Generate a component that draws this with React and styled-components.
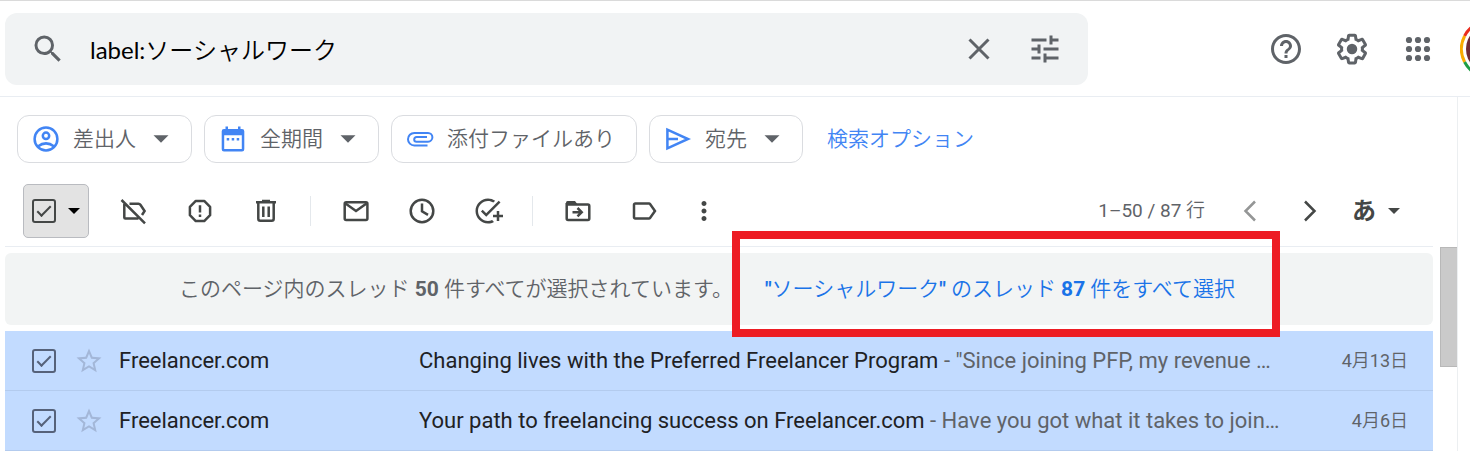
import React from "react";
import styled, { createGlobalStyle } from "styled-components";
import { MdSearch, MdTune, MdHelpOutline, MdAddTask, MdLabelOutline, MdMoreVert, MdStarBorder } from "react-icons/md";

const Global = createGlobalStyle`
  *, *::before, *::after { box-sizing: border-box; }
  body {
    margin: 0;
    background: #fff;
    color: #5f6368;
    font-family: Roboto, "Noto Sans CJK JP", sans-serif;
    font-size: 21px;
    line-height: 30px;
    overflow: hidden;
  }
  button, input { font: inherit; color: inherit; }
`;

const Page = styled.div`
  border-top: 1px solid #dadada;
  overflow: hidden;
`;

const Header = styled.header`
  display: flex;
  align-items: center;
  height: 96px;
  padding-left: 5px;
  border-bottom: 1px solid #e9edf2;
`;

const SearchForm = styled.form`
  flex: 1;
  display: flex;
  align-items: center;
  height: 72px;
  padding: 0 10px;
  background: #f1f3f4;
  border-radius: 12px;
`;

const SearchInput = styled.input`
  flex: 1;
  min-width: 0;
  height: 48px;
  margin-left: 9px;
  padding: 0;
  border: 0;
  outline: 0;
  background: none;
  color: #000;
  font-family: Lato, "Noto Sans CJK JP DemiLight", "Noto Sans CJK JP", sans-serif;
  font-size: 24px;
  font-weight: 400;
`;

const PlainButton = styled.button`
  display: flex;
  align-items: center;
  justify-content: center;
  flex: none;
  width: ${(p) => p.$width || 66}px;
  height: 54px;
  padding: 0;
  border: 0;
  background: none;
  color: ${(p) => p.$color || "#5f6368"};
  svg { display: block; }
`;

const HeaderActions = styled.nav`
  display: flex;
  align-items: center;
  flex: none;
  width: 382px;
  padding-left: 165px;
`;

const AccountLink = styled.a`
  flex: none;
  margin-left: 9px;
  svg { display: block; }
`;

const Body = styled.div`
  display: flex;
`;

const Main = styled.main`
  flex: 1;
  min-width: 0;
`;

const Chips = styled.div`
  display: flex;
  align-items: center;
  gap: 12px;
  padding: 18px 0 0 17px;
  font-weight: 350;
`;

const Chip = styled.button`
  display: flex;
  align-items: center;
  height: 48px;
  padding: 0 ${(p) => (p.$menu ? 12 : 21)}px 0 13px;
  border: 1px solid #dadce0;
  border-radius: 12px;
  background: #fff;
  color: #5f6368;
  white-space: nowrap;
  > svg:first-child { margin-right: 12px; color: #4285f4; }
  > svg + span + svg { margin-left: 7px; }
`;

const OptionsLink = styled.a`
  margin-left: 12px;
  color: #4285f4;
  text-decoration: none;
`;

const Toolbar = styled.div`
  display: flex;
  align-items: center;
  height: 83px;
  padding: 13px 0 0 23px;
`;

const SelectButton = styled.div`
  display: flex;
  align-items: center;
  justify-content: space-between;
  width: 66px;
  height: 54px;
  margin-right: 12px;
  padding: 0 8px;
  border: 1px solid #b9bbc0;
  border-radius: 5px;
  background: #e3e3e3;
`;

const Check = styled.input`
  appearance: none;
  flex: none;
  width: 24px;
  height: 24px;
  margin: 0;
  border: 2px solid ${(p) => p.$color};
  border-radius: 3px;
  display: grid;
  place-items: center;
  &:checked::before {
    content: "";
    width: 14px;
    height: 7px;
    margin-bottom: 4px;
    border-left: 2px solid ${(p) => p.$color};
    border-bottom: 2px solid ${(p) => p.$color};
    transform: rotate(-45deg);
  }
`;

const Divider = styled.span`
  flex: none;
  width: 1px;
  height: 30px;
  margin: 0 12px 0 11px;
  background: #e4e8ec;
`;

const Pager = styled.div`
  display: flex;
  align-items: center;
  margin-left: auto;
  padding-right: 33px;
  font-size: 19px;
`;

const Count = styled.span`
  margin-right: 15px;
  white-space: nowrap;
  font-weight: 350;
`;

const Figure = styled.span`
  font-weight: 400;
`;

const LanguageButton = styled(PlainButton)`
  justify-content: flex-end;
  gap: 12px;
  font-size: 24px;
  font-weight: 700;
`;

const List = styled.section`
  margin-left: 5px;
  padding-top: 6px;
  border-top: 1px solid #e9edf2;
`;

const Banner = styled.div`
  display: flex;
  align-items: center;
  height: 72px;
  margin-bottom: 6px;
  padding-left: 174px;
  border-radius: 6px;
  background: #f2f4f4;
  white-space: nowrap;
  font-weight: 350;
  b { font-weight: 700; }
`;

const Highlight = styled.div`
  position: relative;
  display: flex;
  align-items: center;
  height: 72px;
  margin-left: 32px;
  &::after {
    content: "";
    position: absolute;
    inset: -22px -45px -12px -33px;
    border: 8px solid #ed1c24;
    pointer-events: none;
  }
`;

const SelectAllLink = styled.a`
  color: #1a73e8;
  text-decoration: none;
`;

const MailTable = styled.table`
  width: 100%;
  table-layout: fixed;
  border-collapse: collapse;
`;

const MailRow = styled.tr`
  height: 60px;
  background: #c2dbff;
  box-shadow: inset 0 -1px 0 #b3cbee;
`;

const Cell = styled.td`
  width: ${(p) => (p.$width ? `${p.$width}px` : "auto")};
  padding: 0 ${(p) => p.$right || 0}px 0 ${(p) => p.$left || 0}px;
  color: ${(p) => p.$color || "#202124"};
  font-size: ${(p) => p.$size || 22}px;
  font-weight: ${(p) => p.$weight || 400};
  text-align: ${(p) => p.$align || "left"};
  overflow: hidden;
  text-overflow: ellipsis;
  white-space: nowrap;
`;

const Snippet = styled.span`
  color: #5f6368;
`;

const StarButton = styled(PlainButton)`
  height: 30px;
`;

const ScrollRail = styled.aside`
  flex: none;
  width: 25px;
  margin-right: 12px;
  padding: 150px 0 0 7px;
  border-right: 1px solid #eceff1;
`;

const Thumb = styled.div`
  height: 120px;
  border: 1px solid #b8b8b8;
  border-right: 0;
  background: #cacaca;
`;

const Line = ({ children, width = 2.5 }) => (
  <svg width="30" height="30" viewBox="0 0 30 30" fill="none" stroke="currentColor" strokeWidth={width} aria-hidden="true">
    {children}
  </svg>
);

const Caret = ({ width, box, color }) => (
  <svg width={box} height={box} viewBox={`0 0 ${box} ${box}`} fill={color} aria-hidden="true">
    <path d={`M${(box - width) / 2} ${box / 2 - width / 4}h${width}l-${width / 2} ${width / 2}z`} />
  </svg>
);

const LabelOff = () => (
  <Line>
    <path d="M2.5 4L26 27.3M5.3 8V21.5Q5.3 22.5 6.3 22.5H19.5M10.5 7.7H19.5Q20.7 7.7 21.4 8.7L25.6 15l-2.6 4" />
  </Line>
);
const Report = () => (
  <Line>
    <path d="M10.8 4.9h8.4l5.900 5.900v8.400l-5.900 5.900h-8.400l-5.900-5.900v-8.400z" strokeLinejoin="round" />
    <path d="M15 9.200v7.300M15 18.400v2.500" />
  </Line>
);
const Trash = () => (
  <Line>
    <path d="M5 6.300h20M11 5h8M7.300 7v15.700q0 2 2 2h11.400q2 0 2-2V7M12.300 10.500v10.500M17.700 10.500v10.500" />
  </Line>
);
const Mail = () => (
  <Line>
    <rect x="3.700" y="6.200" width="22.700" height="17.700" rx="1.500" />
    <path d="M4.500 7.500L15 15l10.500-7.500" />
  </Line>
);
const Clock = () => (
  <Line>
    <circle cx="15" cy="15" r="11.300" />
    <path d="M15 7.500v7.800l6 3.600" />
  </Line>
);
const MoveTo = () => (
  <Line>
    <path d="M3.700 7v15.500q0 1.400 1.400 1.400h19.800q1.400 0 1.400-1.400V10q0-1.400-1.400-1.400H3.700" />
    <path d="M3 9V6.500q0-1.500 1.500-1.500H12l3 4z" fill="currentColor" stroke="none" />
    <path d="M9.500 16.200h8.500M14.500 12l4.200 4.200-4.200 4.200" />
  </Line>
);
const Prev = () => (<Line><path d="M20 5.500L10.500 15l9.500 9.500" /></Line>);
const Next = () => (<Line><path d="M10 5.500l9.500 9.500-9.500 9.500" /></Line>);
const Person = () => (
  <Line>
    <circle cx="15" cy="15" r="11.400" />
    <circle cx="15" cy="11.800" r="3.200" />
    <path d="M6.800 22.500q8.200-6.200 16.400 0" />
  </Line>
);
const Calendar = () => (
  <svg width="30" height="30" viewBox="0 0 30 30" fill="currentColor" aria-hidden="true">
    <path fillRule="evenodd" d="M7.500 2.500H10V5h10V2.500h2.500V5H24q2.300 0 2.300 2.300v18q0 2.200-2.300 2.200H6q-2.300 0-2.300-2.200v-18Q3.700 5 6 5h1.500zM6.200 11.200v13.800h17.600V11.200z" />
    <path d="M8.700 14h2.500v2.500H8.700zM13.700 14h2.500v2.500h-2.500zM18.700 14h2.500v2.500h-2.500z" />
  </svg>
);
const Clip = () => (
  <Line width={2}>
    <path d="M22.500 21.500H9.300a6.300 6.300 0 0 1 0-12.600H23a4.200 4.200 0 0 1 0 8.800H11.500a2 2 0 0 1 0-4.600H22" />
  </Line>
);
const Send = () => (
  <Line>
    <path d="M4.400 5.600v18.800L25 15z M5 15h10" />
  </Line>
);
const Close = () => (
  <Line width={3}>
    <path d="M5.500 5.500l19 19M24.500 5.500l-19 19" />
  </Line>
);
const Apps = () => (
  <svg width="36" height="36" viewBox="0 0 36 36" fill="currentColor" aria-hidden="true">
    {[9, 18, 27].flatMap((y) => [9, 18, 27].map((x) => <circle key={`${x}-${y}`} cx={x} cy={y} r="3.100" />))}
  </svg>
);
const Gear = () => (
  <svg width="36" height="36" viewBox="0 0 24 24" fill="currentColor" aria-hidden="true">
    <path d="M13.850 22.250h-3.700c-.74 0-1.360-.54-1.450-1.270l-.27-1.890c-.27-.14-.53-.29-.79-.46l-1.800.72c-.7.26-1.470-.03-1.810-.65L2.200 15.530c-.35-.66-.2-1.440.36-1.880l1.530-1.190c-.01-.15-.02-.3-.02-.46 0-.15.01-.31.02-.46l-1.520-1.190c-.59-.45-.74-1.260-.37-1.880l1.850-3.190c.34-.62 1.110-.9 1.790-.63l1.810.73c.26-.17.52-.32.78-.46l.27-1.910c.09-.7.71-1.250 1.440-1.250h3.700c.74 0 1.360.54 1.450 1.270l.27 1.890c.27.14.53.29.79.46l1.800-.72c.71-.26 1.480.03 1.820.65l1.840 3.180c.36.66.2 1.440-.36 1.880l-1.520 1.190c.01.15.02.3.02.46s-.01.31-.02.46l1.520 1.190c.56.45.72 1.230.37 1.860l-1.860 3.220c-.34.62-1.110.9-1.800.63l-1.800-.72c-.26.17-.52.32-.78.46l-.27 1.910c-.1.68-.72 1.220-1.460 1.220zm-3.230-2h2.760l.37-2.550.53-.22c.44-.18.88-.44 1.340-.78l.45-.34 2.380.96 1.380-2.400-2.030-1.580.07-.56c.03-.26.06-.51.06-.78s-.03-.53-.06-.78l-.07-.56 2.030-1.580-1.390-2.400-2.390.96-.45-.35c-.42-.32-.87-.58-1.330-.77l-.52-.22-.37-2.550h-2.760l-.37 2.550-.53.21c-.44.19-.88.44-1.340.79l-.45.33-2.380-.95-1.390 2.390 2.030 1.580-.07.56a7 7 0 0 0-.06.79c0 .26.02.53.06.78l.07.56-2.030 1.580 1.380 2.400 2.390-.96.45.35c.43.33.86.58 1.330.77l.53.22.38 2.550z" />
    <circle cx="12" cy="12" r="3.500" />
  </svg>
);
const Avatar = () => (
  <svg width="60" height="60" viewBox="0 0 60 60" fill="none" strokeWidth="3" aria-hidden="true">
    <path d="M4.600 17A28.500 28.500 0 0 1 30 1.500" stroke="#ea2d1f" />
    <path d="M4.600 43A28.500 28.500 0 0 1 4.600 17" stroke="#f9ab00" />
    <path d="M30 58.500A28.500 28.500 0 0 1 4.600 43" stroke="#1e9e45" />
    <circle cx="30" cy="30" r="24" fill="#6e2a35" />
  </svg>
);

const INK = "#444746";

const mails = [
  { from: "Freelancer.com", subject: "Changing lives with the Preferred Freelancer Program", snippet: "\"Since joining PFP, my revenue …", month: 4, day: 13 },
  { from: "Freelancer.com", subject: "Your path to freelancing success on Freelancer.com", snippet: "Have you got what it takes to join…", month: 4, day: 6 },
];

const ToolButton = ({ label, children, width, color = INK }) => (
  <PlainButton type="button" aria-label={label} $width={width} $color={color}>{children}</PlainButton>
);

export default function App() {
  return (
    <Page>
      <Global />
      <Header>
        <SearchForm role="search">
          <PlainButton type="button" aria-label="検索"><MdSearch size={36} /></PlainButton>
          <SearchInput aria-label="メールを検索" defaultValue="label:ソーシャルワーク" />
          <PlainButton type="button" aria-label="検索をクリア"><Close /></PlainButton>
          <PlainButton type="button" aria-label="検索オプションを表示"><MdTune size={36} /></PlainButton>
        </SearchForm>
        <HeaderActions>
          <PlainButton type="button" aria-label="サポート"><MdHelpOutline size={36} /></PlainButton>
          <PlainButton type="button" aria-label="設定"><Gear /></PlainButton>
          <PlainButton type="button" aria-label="アプリ"><Apps /></PlainButton>
          <AccountLink href="#account" aria-label="アカウント"><Avatar /></AccountLink>
        </HeaderActions>
      </Header>
      <Body>
        <Main>
          <Chips>
            <Chip type="button" $menu><Person /><span>差出人</span><Caret width={15} box={36} color="#5f6368" /></Chip>
            <Chip type="button" $menu><Calendar /><span>全期間</span><Caret width={15} box={36} color="#5f6368" /></Chip>
            <Chip type="button"><Clip /><span>添付ファイルあり</span></Chip>
            <Chip type="button" $menu><Send /><span>宛先</span><Caret width={15} box={36} color="#5f6368" /></Chip>
            <OptionsLink href="#options">検索オプション</OptionsLink>
          </Chips>
          <Toolbar>
            <SelectButton>
              <Check type="checkbox" aria-label="すべて選択" defaultChecked $color={INK} />
              <Caret width={12} box={12} color="#000" />
            </SelectButton>
            <ToolButton label="ラベルを削除"><LabelOff /></ToolButton>
            <ToolButton label="迷惑メールを報告"><Report /></ToolButton>
            <ToolButton label="削除"><Trash /></ToolButton>
            <Divider />
            <ToolButton label="未読にする"><Mail /></ToolButton>
            <ToolButton label="スヌーズ"><Clock /></ToolButton>
            <ToolButton label="ToDo リストに追加"><MdAddTask size={30} /></ToolButton>
            <Divider />
            <ToolButton label="移動"><MoveTo /></ToolButton>
            <ToolButton label="ラベル"><MdLabelOutline size={30} /></ToolButton>
            <ToolButton label="その他" width={54}><MdMoreVert size={30} /></ToolButton>
            <Pager>
              <Count><Figure>1–50 / 87</Figure> 行</Count>
              <ToolButton label="前" width={60} color="#949696"><Prev /></ToolButton>
              <ToolButton label="次" width={60}><Next /></ToolButton>
              <LanguageButton type="button" aria-label="入力ツール" $width={60} $color={INK}>
                あ<Caret width={12} box={12} color={INK} />
              </LanguageButton>
            </Pager>
          </Toolbar>
          <List>
            <Banner>
              <span>このページ内のスレッド <b>50</b> 件すべてが選択されています。</span>
              <Highlight>
                <SelectAllLink href="#all"><b>"</b>ソーシャルワーク<b>"</b> のスレッド <b>87</b> 件をすべて選択</SelectAllLink>
              </Highlight>
            </Banner>
            <MailTable>
              <tbody>
                {mails.map((m) => (
                  <MailRow key={m.subject}>
                    <Cell $width={60} $left={27}><Check type="checkbox" aria-label={m.subject} defaultChecked $color="#56627a" /></Cell>
                    <Cell $width={54}>
                      <StarButton type="button" aria-label="スター" $width={48} $color="#a3b7d8"><MdStarBorder size={30} /></StarButton>
                    </Cell>
                    <Cell $width={300}>{m.from}</Cell>
                    <Cell>{m.subject}<Snippet> - {m.snippet}</Snippet></Cell>
                    <Cell $width={120} $right={25} $align="right" $size={18} $color="#5f6368" $weight={350}>
                      <Figure>{m.month}</Figure>月<Figure>{m.day}</Figure>日
                    </Cell>
                  </MailRow>
                ))}
              </tbody>
            </MailTable>
          </List>
        </Main>
        <ScrollRail><Thumb /></ScrollRail>
      </Body>
    </Page>
  );
}
